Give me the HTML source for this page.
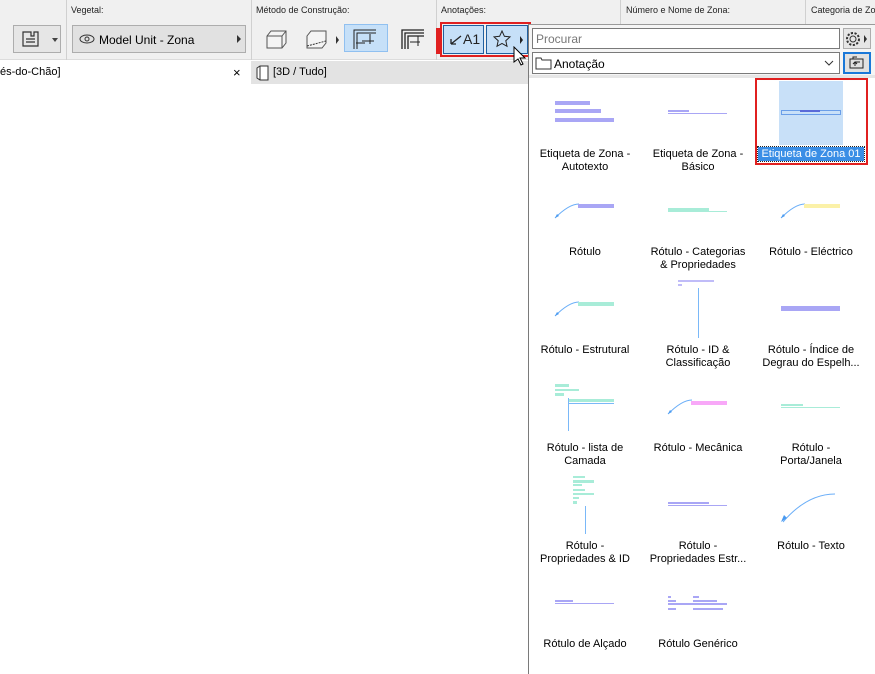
<!DOCTYPE html><html><head><meta charset="utf-8"><style>
*{margin:0;padding:0;box-sizing:border-box}
body{width:875px;height:674px;overflow:hidden;background:#fff;font-family:"Liberation Sans",sans-serif;font-size:11px;color:#000;position:relative}
.a{position:absolute}
.lbl{position:absolute;font-size:9px;color:#222;top:5px;white-space:nowrap}
.sep{position:absolute;top:0;width:1px;height:60px;background:#d0d0d0}
.t{position:absolute;width:112px;text-align:center;font-size:11px;line-height:13px}
.p{background:#a9a6f5}.g{background:#a8ecd8}.y{background:#fbf1a8}.m{background:#f8a8f8}.l{background:#7ab8f8}
</style></head><body>
<div class="a" style="left:0;top:0;width:875px;height:60px;background:#f0f0f0;border-bottom:1px solid #dcdcdc"></div>
<div class="sep" style="left:66px"></div><div class="sep" style="left:251px"></div><div class="sep" style="left:436px"></div><div class="sep" style="left:620px"></div><div class="sep" style="left:805px"></div>
<div class="lbl" style="left:71px">Vegetal:</div>
<div class="lbl" style="left:256px">Método de Construção:</div>
<div class="lbl" style="left:441px">Anotações:</div>
<div class="lbl" style="left:626px">Número e Nome de Zona:</div>
<div class="lbl" style="left:811px">Categoria de Zona</div>
<div class="a" style="left:13px;top:25px;width:48px;height:28px;border:1px solid #adadad;background:#e6e6e6"></div>
<svg class="a" style="left:22px;top:30px" width="36" height="20"><path d="M1 2h8v4h3v-4h4v14h-15z M4 9h9M4 12h9" fill="none" stroke="#333" stroke-width="1.2"/><path d="M30 8l3 4 3-4z" fill="#444"/></svg>
<div class="a" style="left:72px;top:25px;width:174px;height:28px;border:1px solid #adadad;background:#e1e1e1;padding:7px 0 0 26px;font-size:12px">Model Unit - Zona</div>
<svg class="a" style="left:79px;top:33px" width="16" height="12"><ellipse cx="8" cy="6" rx="7" ry="4" fill="none" stroke="#333"/><circle cx="8" cy="6" r="2" fill="none" stroke="#333"/></svg>
<div class="a" style="left:237px;top:35px;width:0;height:0;border-left:4px solid #333;border-top:4px solid transparent;border-bottom:4px solid transparent"></div>
<svg class="a" style="left:264px;top:28px" width="150" height="24"><path d="M3 8l4-5h15v12l-4 5H3z M3 8h15v12 M18 8l4-5" fill="#f4f4f4" stroke="#555"/><path d="M43 8l4-5h15v12l-4 5H43z" fill="#f4f4f4" stroke="#555"/><path d="M43 18l19-5" stroke="#333" stroke-dasharray="2 1"/><path d="M72 8l3 4-3 4z" fill="#333"/></svg>
<div class="a" style="left:344px;top:24px;width:44px;height:28px;background:#c6e0f8;border:1px solid #90c0f0"></div>
<svg class="a" style="left:352px;top:28px" width="80" height="22"><path d="M2 21V2h22M5 21V5h19M10 13h12M18 6v10M4 15h9" fill="none" stroke="#222"/><path d="M50 21V2h22M53 21V5h19M56 21V8h16" fill="none" stroke="#222" stroke-width="1.3"/><path d="M58 14h10M66 8v10" stroke="#222"/></svg>
<div class="a" style="left:436px;top:28px;width:4px;height:26px;background:#e02020"></div>
<div class="a" style="left:440px;top:22px;width:91px;height:35px;border:2px solid #e02020"></div>
<div class="a" style="left:443px;top:25px;width:41px;height:29px;background:#c6e0f8;border:1px solid #2060a0;font-size:14px;padding:5px 0 0 19px;color:#222">A1</div>
<svg class="a" style="left:449px;top:34px" width="14" height="12"><path d="M2 10L12 2M2 10h5M2 10V5" stroke="#222" fill="none" stroke-width="1.3"/></svg>
<div class="a" style="left:486px;top:25px;width:42px;height:29px;background:#c6e0f8;border:1px solid #2060a0"></div>
<svg class="a" style="left:493px;top:30px" width="32" height="20"><path d="M9 1l2.4 5.3 5.6.6-4.2 3.8 1.2 5.6L9 13.4 4 16.3l1.2-5.6L1 6.9l5.6-.6z" fill="none" stroke="#222"/><path d="M27 6l3 4-3 4z" fill="#222"/></svg>
<svg class="a" style="left:513px;top:46px;z-index:5" width="14" height="20"><path d="M1 1v15l4-3 3 6 2-1-3-6h5z" fill="#fff" stroke="#000"/></svg>
<div class="a" style="left:0;top:61px;width:251px;height:23px;background:#fff;padding:5px 0 0 0;font-size:11px">és-do-Chão]<span style="position:absolute;left:233px;top:4px;font-size:13px">×</span></div>
<div class="a" style="left:251px;top:61px;width:624px;height:23px;background:#e3e3e3;padding:5px 0 0 22px">[3D / Tudo]</div>
<svg class="a" style="left:256px;top:65px" width="14" height="16"><path d="M1 3l3-2h8v14H4l-3-2z M4 1v14" fill="#fff" stroke="#333"/></svg>
<div class="a" style="left:528px;top:24px;width:347px;height:650px;background:#fff;border-left:1px solid #7a7a7a;border-top:1px solid #9a9a9a"></div>
<div class="a" style="left:529px;top:25px;width:346px;height:53px;background:#f5f5f5"></div>
<div class="a" style="left:532px;top:28px;width:308px;height:21px;background:#fff;border:1px solid #7a7a7a;color:#777;font-size:12px;padding:3px 0 0 3px">Procurar</div>
<div class="a" style="left:843px;top:28px;width:28px;height:21px;background:#e6e6e6;border:1px solid #adadad"></div>
<svg class="a" style="left:845px;top:30px" width="26" height="18"><circle cx="8" cy="9" r="3" fill="none" stroke="#333"/><circle cx="8" cy="9" r="6" fill="none" stroke="#333" stroke-dasharray="2.2 1.5" stroke-width="2"/><path d="M19 5l3 4-3 4z" fill="#333"/></svg>
<div class="a" style="left:532px;top:52px;width:308px;height:22px;background:#fff;border:1px solid #7a7a7a;font-size:12px;padding:4px 0 0 21px">Anotação</div>
<svg class="a" style="left:535px;top:56px" width="18" height="14"><path d="M1 2h5l1 2h9v9H1z" fill="#fff" stroke="#333"/></svg>
<svg class="a" style="left:824px;top:59px" width="10" height="8"><path d="M1 2l4 4 4-4" fill="none" stroke="#333"/></svg>
<div class="a" style="left:843px;top:52px;width:28px;height:22px;background:#e1e1e1;border:2px solid #1a78d8"></div>
<svg class="a" style="left:849px;top:56px" width="16" height="14"><path d="M1 3h13v9H1z M4 3V1h4 M6 10V6M4 8l2-2 2 2M6 6h5" fill="none" stroke="#222"/></svg>
<div class="a" style="left:529px;top:75px;width:346px;height:3px;background:#e6e6e6"></div>
<div class="a p" style="left:555px;top:101px;width:35px;height:4px"></div>
<div class="a p" style="left:555px;top:109px;width:46px;height:4px"></div>
<div class="a p" style="left:555px;top:118px;width:59px;height:4px"></div>
<div class="a p" style="left:668px;top:110px;width:21px;height:2px"></div>
<div class="a p" style="left:668px;top:113px;width:59px;height:1px"></div>
<div class="a" style="left:779px;top:81px;width:64px;height:64px;background:#c8e0f8"></div>
<div class="a" style="left:781px;top:110px;width:60px;height:5px;border:1px solid #6a9ee8"></div>
<div class="a" style="left:800px;top:110px;width:20px;height:2px;background:#5a6ad8"></div>
<div class="a" style="left:758px;top:147px;width:106px;height:14px;background:#3a8ee6;outline:1px dotted #222;color:#fff;text-align:center;font-size:11px;line-height:14px">Etiqueta de Zona 01</div>
<div class="a" style="left:755px;top:78px;width:113px;height:87px;border:2px solid #e02020"></div>
<div class="t" style="left:529px;top:148px">Etiqueta de Zona -<br>Autotexto</div>
<div class="t" style="left:642px;top:148px">Etiqueta de Zona -<br>Básico</div>
<svg class="a" style="left:529px;top:78px" width="346" height="596">
<g fill="none" stroke="#6aaef8"><path d="M26 140q14-14 24-14"/><path d="M252 140q14-14 24-14"/><path d="M26 238q14-14 24-14"/><path d="M139 336q14-14 24-14"/><path d="M306 416q-28 0-52 28"/></g>
<g fill="#4a9af0"><path d="M26 140l2-4 2 2z"/><path d="M252 140l2-4 2 2z"/><path d="M26 238l2-4 2 2z"/><path d="M139 336l2-4 2 2z"/><path d="M252 444l3-7 3 3z"/></g>
</svg>
<div class="a p" style="left:578px;top:204px;width:36px;height:4px"></div>
<div class="a g" style="left:668px;top:208px;width:41px;height:3px"></div>
<div class="a g" style="left:668px;top:211px;width:59px;height:1px"></div>
<div class="a y" style="left:804px;top:204px;width:36px;height:4px"></div>
<div class="t" style="left:529px;top:246px">Rótulo</div>
<div class="t" style="left:642px;top:246px">Rótulo - Categorias<br>&amp; Propriedades</div>
<div class="t" style="left:755px;top:246px">Rótulo - Eléctrico</div>
<div class="a g" style="left:578px;top:302px;width:36px;height:4px"></div>
<div class="a" style="left:678px;top:280px;width:36px;height:2px;background:#c0bcf8"></div>
<div class="a" style="left:678px;top:284px;width:4px;height:2px;background:#c0bcf8"></div>
<div class="a l" style="left:698px;top:288px;width:1px;height:50px"></div>
<div class="a p" style="left:781px;top:306px;width:59px;height:5px"></div>
<div class="t" style="left:529px;top:344px">Rótulo - Estrutural</div>
<div class="t" style="left:642px;top:344px">Rótulo - ID &amp;<br>Classificação</div>
<div class="t" style="left:755px;top:344px">Rótulo - Índice de<br>Degrau do Espelh...</div>
<div class="a g" style="left:555px;top:384px;width:14px;height:3px"></div>
<div class="a g" style="left:555px;top:389px;width:24px;height:2px"></div>
<div class="a g" style="left:555px;top:393px;width:9px;height:3px"></div>
<div class="a l" style="left:568px;top:398px;width:1px;height:33px"></div>
<div class="a g" style="left:569px;top:399px;width:45px;height:3px"></div>
<div class="a l" style="left:569px;top:403px;width:45px;height:1px"></div>
<div class="a m" style="left:691px;top:401px;width:36px;height:4px"></div>
<div class="a g" style="left:781px;top:404px;width:22px;height:2px"></div>
<div class="a g" style="left:781px;top:407px;width:59px;height:1px"></div>
<div class="t" style="left:529px;top:442px">Rótulo - lista de<br>Camada</div>
<div class="t" style="left:642px;top:442px">Rótulo - Mecânica</div>
<div class="t" style="left:755px;top:442px">Rótulo -<br>Porta/Janela</div>
<div class="a g" style="left:573px;top:476px;width:12px;height:2px"></div>
<div class="a g" style="left:573px;top:480px;width:21px;height:3px"></div>
<div class="a g" style="left:573px;top:484px;width:9px;height:2px"></div>
<div class="a g" style="left:573px;top:489px;width:12px;height:2px"></div>
<div class="a g" style="left:573px;top:493px;width:21px;height:2px"></div>
<div class="a g" style="left:573px;top:497px;width:6px;height:2px"></div>
<div class="a g" style="left:573px;top:501px;width:4px;height:3px"></div>
<div class="a l" style="left:585px;top:506px;width:1px;height:28px"></div>
<div class="a p" style="left:668px;top:502px;width:41px;height:2px"></div>
<div class="a p" style="left:668px;top:505px;width:59px;height:1px"></div>
<div class="t" style="left:529px;top:540px">Rótulo -<br>Propriedades &amp; ID</div>
<div class="t" style="left:642px;top:540px">Rótulo -<br>Propriedades Estr...</div>
<div class="t" style="left:755px;top:540px">Rótulo - Texto</div>
<div class="a p" style="left:555px;top:600px;width:18px;height:2px"></div>
<div class="a p" style="left:555px;top:603px;width:59px;height:1px"></div>
<div class="a p" style="left:668px;top:596px;width:3px;height:2px"></div>
<div class="a p" style="left:693px;top:596px;width:6px;height:2px"></div>
<div class="a p" style="left:668px;top:600px;width:8px;height:2px"></div>
<div class="a p" style="left:693px;top:600px;width:24px;height:2px"></div>
<div class="a p" style="left:668px;top:603px;width:59px;height:2px"></div>
<div class="a p" style="left:668px;top:608px;width:8px;height:2px"></div>
<div class="a p" style="left:693px;top:608px;width:30px;height:2px"></div>
<div class="t" style="left:529px;top:638px">Rótulo de Alçado</div>
<div class="t" style="left:642px;top:638px">Rótulo Genérico</div>
</body></html>
